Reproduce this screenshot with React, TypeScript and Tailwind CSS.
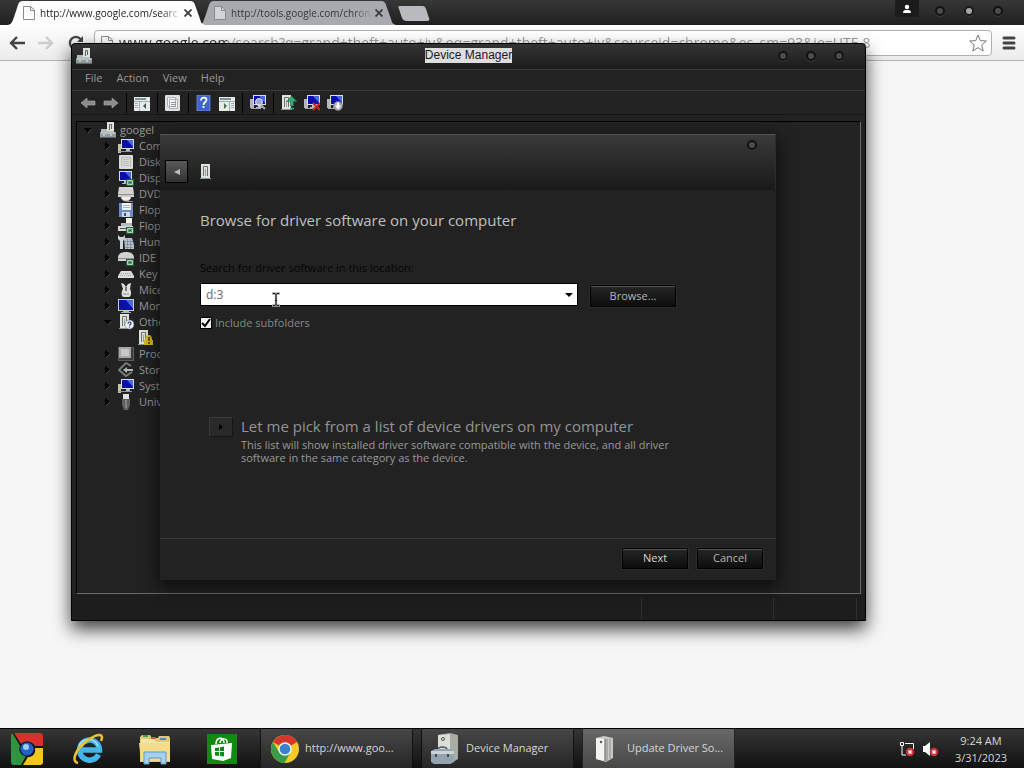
import { useState } from "react"
import type { ReactNode } from "react"

interface TreeItem {
  label: string
  icon: ReactNode
  open?: boolean
  child?: ReactNode
}

function Glyph({ children }: { children: ReactNode }) {
  return (
    <svg viewBox="0 0 16 16" className="size-4 shrink-0" aria-hidden="true">
      {children}
    </svg>
  )
}

/* shared parts of the small device drawings */
function Screen({ x = 0, y = 0 }: { x?: number; y?: number }) {
  return (
    <g transform={`translate(${x} ${y})`}>
      <rect x="0" y="0" width="13" height="10" fill="#d6dde4" />
      <rect x="1" y="1" width="11" height="8" fill="#0a0fa8" />
      <path d="M6 1h6v7z" fill="#4a68e0" />
      <path d="M5 10h4v2h2v1H3v-1h2z" fill="#b4bcc2" />
    </g>
  )
}

function Tower({ x = 0, y = 0 }: { x?: number; y?: number }) {
  return (
    <g transform={`translate(${x} ${y})`}>
      <rect x="0" y="0" width="9" height="14" fill="#dfe3dd" />
      <path d="M2.500 12V2.500h4V12" fill="none" stroke="#6c726c" />
      <rect x="4" y="5" width="1" height="7" fill="#9aa09a" />
      <rect x="-1" y="14" width="11" height="1" fill="#8f968f" />
    </g>
  )
}

function CardBadge() {
  return (
    <g>
      <rect x="8" y="9" width="8" height="7" fill="#25613c" />
      <path d="M9.500 10.500h5v4h-5z" fill="#5d9c72" stroke="#a8d6b4" />
      <path d="M11 12.500h2" stroke="#25613c" />
    </g>
  )
}

const ComputerGlyph = (
  <Glyph>
    <rect x="0" y="6" width="3" height="9" fill="#c3c6ad" />
    <Screen x={3} y={1} />
    <rect x="1" y="13" width="13" height="1" fill="#8e979e" />
  </Glyph>
)

const MachineGlyph = (
  <Glyph>
    <path d="M7 0h7v9H7z" fill="#dde2dd" />
    <path d="M9.500 8V2.500h2V7" fill="none" stroke="#5e6660" />
    <path d="M1 7h6v2h7v2H1z" fill="#b4bcbc" />
    <rect x="0" y="10" width="16" height="5" fill="#8f9a9c" />
    <path d="M1 11h14M3 13h2m5 0h2" stroke="#e3e9e9" />
    <path d="M0 15.500h16" stroke="#5c6668" />
  </Glyph>
)

// labels are shortened to the strip left of the dialog
const tree: TreeItem[] = [
  { label: "Com", icon: ComputerGlyph },
  {
    label: "Disk",
    icon: (
      <Glyph>
        <rect x="1" y="1" width="14" height="14" rx="1" fill="#d9dbd6" />
        <path d="M3.500 3.500h9v8h-9zM5 5.500h6m-6 2h6m-6 2h6" fill="none" stroke="#b9bcb7" />
      </Glyph>
    ),
  },
  {
    label: "Disp",
    icon: (
      <Glyph>
        <Screen x={1} y={1} />
        <CardBadge />
      </Glyph>
    ),
  },
  {
    label: "DVD",
    icon: (
      <Glyph>
        <path d="M1 1h14l1 7v3H0V8z" fill="#d4d5d2" />
        <path d="M0 8.500h16" stroke="#8f918d" />
        <path d="M3 10h10c0 3-2 5-5 5s-5-2-5-5z" fill="#eceeec" stroke="#b5b8b4" />
        <path d="M9 15.500h6" stroke="#d2763a" />
      </Glyph>
    ),
  },
  {
    label: "Flop",
    icon: (
      <Glyph>
        <path d="M1 1h14v14H1z" fill="#6d8cc6" />
        <path d="M4 1h9v7H4z" fill="#eef2f6" />
        <path d="M5 3.500h7m-7 2h7" stroke="#a9b4c4" />
        <path d="M4 10h8v5H4z" fill="#d4dbe2" />
        <path d="M6 11h2v3H6z" fill="#3a5480" />
      </Glyph>
    ),
  },
  {
    label: "Flop",
    icon: (
      <Glyph>
        <path d="M8 0h6v5H8z" fill="#f1f3f3" />
        <path d="M3 5h11v3H3z" fill="#b4babb" />
        <path d="M0 8h15v5H0z" fill="#d5dadb" />
        <path d="M2 10.500h6" stroke="#4d5556" />
        <CardBadge />
      </Glyph>
    ),
  },
  {
    label: "Hum",
    icon: (
      <Glyph>
        <path d="M0 1v4l2 2v8h3V7l2-2V1L5 3H2z" fill="#ccd3da" />
        <path d="M6 4h8l2 7v4H7z" fill="#b9c3cd" />
        <path d="M7 7.500h8m-8 3h8m-8 3h8M9.500 5v10m3-10v10" stroke="#7b8896" strokeWidth=".8" />
      </Glyph>
    ),
  },
  {
    label: "IDE",
    icon: (
      <Glyph>
        <path d="M0 7c1-4 4-5 8-5s7 1 8 5v4H0z" fill="#cfd3d0" />
        <path d="M0 8.500h16" stroke="#878d89" />
        <CardBadge />
      </Glyph>
    ),
  },
  {
    label: "Key",
    icon: (
      <Glyph>
        <path d="M3 5h10l3 5v2H0v-2z" fill="#dcdcda" />
        <path d="M3 7.500h10M2 9.500h12" stroke="#a2a2a0" strokeDasharray="1 1" />
      </Glyph>
    ),
  },
  {
    label: "Mice",
    icon: (
      <Glyph>
        <path d="M3 1l3 1 2 3 2-3 3-1-1 6c2 3 1 8-1 8H6c-3 0-3-5-1-8z" fill="#dededa" />
        <path d="M8 5v4" stroke="#555" strokeWidth="1.500" />
        <path d="M5 12h6" stroke="#94948f" />
      </Glyph>
    ),
  },
  {
    label: "Mon",
    icon: (
      <Glyph>
        <rect x="0" y="1" width="16" height="12" fill="#c5ccd2" />
        <rect x="1" y="2" width="14" height="10" fill="#0a10ac" />
        <path d="M8 2h7v9z" fill="#4c6ae2" />
        <path d="M5 13h6v1h2v1H3v-1h2z" fill="#abb4ba" />
      </Glyph>
    ),
  },
  {
    label: "Othe",
    open: true,
    icon: (
      <Glyph>
        <Tower x={2} />
        <circle cx="11.500" cy="10.500" r="4.500" fill="#eef0f8" stroke="#717996" strokeWidth=".6" />
        <path d="M10 9.500c0-2 3-2 3 0 0 1-1.500 1-1.500 2m0 1v1" fill="none" stroke="#27327c" strokeWidth="1.200" />
      </Glyph>
    ),
    child: (
      <Glyph>
        <Tower x={1} />
        <path d="M11 5c2 0 3 2 3 5h1v5H6v-5h1c0-3 2-5 4-5z" fill="#d6b62a" />
        <path d="M11 7v4m0 1v2" stroke="#4a3a04" strokeWidth="1.500" />
      </Glyph>
    ),
  },
  {
    label: "Proc",
    icon: (
      <Glyph>
        <rect x=".5" y="1.500" width="15" height="13" fill="#3a3c3b" stroke="#8a8d8b" strokeDasharray="1 1" />
        <rect x="1" y="1" width="12" height="11" fill="#a4a7a5" />
        <rect x="3" y="3" width="8" height="7" fill="#c6c8c6" />
      </Glyph>
    ),
  },
  {
    label: "Stor",
    icon: (
      <Glyph>
        <path d="M13 4L8 1 1 8l7 6 6-4" fill="none" stroke="#767a78" strokeWidth="2" />
        <path d="M5 8l4-3v2h6v2H9v2z" fill="#b3b6b4" />
      </Glyph>
    ),
  },
  { label: "Syst", icon: ComputerGlyph },
  {
    label: "Univ",
    icon: (
      <Glyph>
        <rect x="5" y="0" width="6" height="5" fill="#dfe0df" />
        <path d="M4 5h8v6l-2 5H6l-2-5z" fill="#5f6160" />
        <path d="M8 6v8" stroke="#8d8f8e" strokeWidth="1.500" />
      </Glyph>
    ),
  },
]

interface Tool {
  name: string
  icon?: ReactNode
}

const ArrowShape = (
  <path d="M1 8l6-5v3h8v4H7v3z" fill="#8b8b8b" stroke="#b0b0b0" strokeWidth=".6" />
)

const PaneGlyph = ({ side }: { side: "left" | "right" }) => (
  <Glyph>
    <rect x="0" y="2" width="16" height="14" fill="#e6eaea" />
    <rect x="1" y="3" width="11" height="2" fill="#7f9096" />
    <path d="M0 6.500h16" stroke="#9fabae" />
    {side === "left" ? (
      <>
        <path d="M5.500 7v9M1 8.500h3m-3 2h3m-3 2h3" stroke="#a0acaf" />
        <path d="M12 8v6l-3-3z" fill="#3e5a50" />
      </>
    ) : (
      <>
        <path d="M10.500 7v9m1.500-7.500h3m-3 2h3m-3 2h3" stroke="#a0acaf" />
        <path d="M5 8v6l3-3z" fill="#3c7a48" />
      </>
    )}
  </Glyph>
)

const tools: Tool[] = [
  { name: "Back", icon: <Glyph>{ArrowShape}</Glyph> },
  { name: "Forward", icon: <Glyph><g transform="translate(16 0) scale(-1 1)">{ArrowShape}</g></Glyph> },
  { name: "" },
  { name: "Show console tree", icon: <PaneGlyph side="left" /> },
  { name: "" },
  {
    name: "Properties",
    icon: (
      <Glyph>
        <rect x="0" y="0" width="15" height="16" rx="1" fill="#dfe1e1" />
        <path d="M2.500 2.500h8v9h-8zM4.500 4.500h8v9h-8z" fill="#f5f6f6" stroke="#a9afb1" />
        <path d="M6 7.500h5m-5 2h5m-5 2h5" stroke="#8f979a" />
      </Glyph>
    ),
  },
  { name: "" },
  {
    name: "Help",
    icon: (
      <Glyph>
        <rect x="1" y="0" width="13" height="16" fill="#3f63c8" stroke="#7d9ae0" strokeWidth=".7" />
        <path d="M5 5.500C5 1.500 10.500 2 10.500 5c0 2-3 2-3 5m0 1v2" fill="none" stroke="#fff" strokeWidth="1.800" />
      </Glyph>
    ),
  },
  { name: "Show action pane", icon: <PaneGlyph side="right" /> },
  { name: "" },
  {
    name: "Scan for hardware changes",
    icon: (
      <Glyph>
        <rect x="0" y="4" width="4" height="9" fill="#b3b7bb" />
        <Screen x={3} y={0} />
        <circle cx="9" cy="7" r="3.500" fill="#c2cbe8" fillOpacity=".8" stroke="#e0e4ea" />
        <path d="M11 10l4 4" stroke="#a0a5aa" strokeWidth="2" />
        <path d="M1 13.500h10" stroke="#a5abb0" />
      </Glyph>
    ),
  },
  { name: "" },
  {
    name: "Update driver software",
    icon: (
      <Glyph>
        <Tower x={1} />
        <path d="M10.500 1L16 6.500h-3.500V11h-3V6.500H6z" fill="#3aa873" stroke="#1d6a45" strokeWidth=".6" />
        <path d="M9 13.500h4" stroke="#3aa873" strokeWidth="1.500" />
      </Glyph>
    ),
  },
  {
    name: "Uninstall",
    icon: (
      <Glyph>
        <rect x="0" y="4" width="4" height="9" fill="#b3b7bb" />
        <Screen x={3} y={0} />
        <path d="M1 13.500h8" stroke="#a5abb0" />
        <path d="M9 8l7 7m0-7l-7 7" stroke="#e01e1e" strokeWidth="2" />
      </Glyph>
    ),
  },
  {
    name: "Disable",
    icon: (
      <Glyph>
        <rect x="0" y="4" width="4" height="9" fill="#b3b7bb" />
        <Screen x={3} y={0} />
        <path d="M1 13.500h8" stroke="#a5abb0" />
        <circle cx="11" cy="11" r="4.500" fill="#a9acaf" stroke="#7e8286" strokeWidth=".6" />
        <path d="M10 7.500h2v3h2l-3 4-3-4h2z" fill="#fff" />
      </Glyph>
    ),
  },
]

function PageIcon() {
  return (
    <svg viewBox="0 0 12 14" className="h-3.5 w-3 shrink-0" fill="none" stroke="#8a8a8a" aria-hidden="true">
      <path d="M.5.5h7L11.500 4v9.500h-11z" fill="#fbfbfb" fillOpacity=".5" />
      <path d="M7.500.5V4.500h4" />
    </svg>
  )
}

function Tab({ title, active }: { title: string; active?: boolean }) {
  return (
    <div className={active ? "relative z-10 h-6 w-[197px]" : "relative -ml-1.5 h-6 w-[197px]"}>
      <svg viewBox="0 0 197 24" preserveAspectRatio="none" className="absolute inset-0 size-full" aria-hidden="true">
        <path
          d="M0 24c4-1 4-3 6-8l4-12c1-3 2-4 5-4h167c3 0 4 1 5 4l5 14c1 4 2 5 5 6z"
          fill={active ? "#fdfdfd" : "#a9aab0"}
        />
      </svg>
      <div className="relative flex h-full items-center pl-[15px] text-[10px]">
        <PageIcon />
        <span
          className={
            active
              ? "ml-[5px] w-36 whitespace-nowrap text-[#222] [mask-image:linear-gradient(to_right,#000_85%,transparent_98%)]"
              : "ml-[5px] w-36 whitespace-nowrap text-[#35373c] [mask-image:linear-gradient(to_right,#000_85%,transparent_98%)]"
          }
        >
          {title}
        </span>
        <button type="button" aria-label="Close tab" className="flex size-2 items-center justify-center">
          <svg viewBox="0 0 8 8" className="size-2" stroke="#3c3c3c" strokeWidth="1.800" aria-hidden="true">
            <path d="M.5.5l7 7m0-7l-7 7" />
          </svg>
        </button>
      </div>
    </div>
  )
}

function Dot({ label, lit }: { label: string; lit?: boolean }) {
  return (
    <button
      type="button"
      aria-label={label}
      className={
        lit
          ? "size-2.5 rounded-full border-2 border-[#1a1a1a] bg-[#a5a5a5] shadow-[0_1px_1px_#3c3c3c]"
          : "size-2.5 rounded-full border-2 border-[#111] bg-[#4c4c4c] shadow-[0_1px_1px_#3c3c3c]"
      }
    />
  )
}

function Browser() {
  return (
    <div className="flex min-h-0 flex-1 flex-col bg-[#f6f6f6]">
      <div className="flex h-[25px] shrink-0 items-end bg-linear-to-b from-[#363836] to-[#1f1f1f] pl-2">
        <Tab title="http://www.google.com/searc" active />
        <Tab title="http://tools.google.com/chron" />
        <button type="button" aria-label="New tab" className="mb-1 ml-0.5">
          <svg viewBox="0 0 32 15" className="h-[15px] w-8" aria-hidden="true">
            <path d="M2 0h22c3 0 3 1 4 3l3 9c1 2 0 3-2 3H9c-3 0-4-1-5-3L1 3c-1-2-1-3 1-3z" fill="#b9babd" />
          </svg>
        </button>
        <div className="ml-auto flex h-full items-start gap-5 pr-[21px]">
          <button type="button" aria-label="User" className="flex h-[17px] w-6 items-center justify-center bg-[#1b1c1b]">
            <svg viewBox="0 0 10 10" className="size-2.5" fill="#fff" aria-hidden="true">
              <circle cx="5" cy="3" r="2.200" />
              <path d="M1 9c0-2 1-3 2.500-3h3C8 6 9 7 9 9z" />
            </svg>
          </button>
          <div className="-ml-1 flex gap-[19px] pt-1.5">
            <Dot label="Minimize browser" />
            <Dot label="Maximize browser" lit />
            <Dot label="Close browser" />
          </div>
        </div>
      </div>
      <div className="flex h-9 shrink-0 items-center border-b border-[#b4b4b4] bg-linear-to-b from-[#fdfdfd] to-[#ececec] pr-2 pl-[9px]">
        <button type="button" aria-label="Go back">
          <svg viewBox="0 0 16 14" className="h-3.5 w-4" fill="none" stroke="#444" strokeWidth="2.400" aria-hidden="true">
            <path d="M8 1L2 7l6 6M2 7h14" />
          </svg>
        </button>
        <button type="button" aria-label="Go forward" className="ml-[13px]">
          <svg viewBox="0 0 16 14" className="h-3.5 w-4" fill="none" stroke="#ccc" strokeWidth="2.400" aria-hidden="true">
            <path d="M8 1l6 6-6 6M14 7H0" />
          </svg>
        </button>
        <button type="button" aria-label="Reload" className="ml-3.5">
          <svg viewBox="0 0 16 16" className="size-4" fill="none" stroke="#444" strokeWidth="2.400" aria-hidden="true">
            <path d="M13.500 10A6 6 0 1 1 12.500 4" />
            <path d="M15 1v6H9z" fill="#444" stroke="none" />
          </svg>
        </button>
        <div className="ml-2.5 flex h-[26px] flex-1 items-center rounded-sm border border-[#b0b0b0] bg-white pr-1 pl-1.5">
          <PageIcon />
          <input
            aria-label="Address"
            defaultValue="www.google.com/search?q=grand+theft+auto+iv&oq=grand+theft+auto+iv&sourceid=chrome&es_sm=93&ie=UTF-8"
            className="ml-1.5 min-w-0 flex-1 bg-linear-to-r from-[#333] from-[108px] to-[#9a9a9a] to-[108px] bg-clip-text text-[14px] text-transparent outline-none"
          />
          <button type="button" aria-label="Bookmark this page">
            <svg viewBox="0 0 18 18" className="size-[18px]" fill="#fff" stroke="#777" aria-hidden="true">
              <path d="M9 1l2.300 5.600 6 .4-4.600 3.900L14.200 17 9 13.600 3.800 17l1.500-6.100L.7 7l6-.4z" />
            </svg>
          </button>
        </div>
        <button type="button" aria-label="Menu" className="ml-2.5">
          <svg viewBox="0 0 14 14" className="size-3.5" stroke="#444" strokeWidth="3" strokeLinecap="round" aria-hidden="true">
            <path d="M2 2h10M2 7h10M2 12h10" />
          </svg>
        </button>
      </div>
    </div>
  )
}

function Chevron({ open }: { open?: boolean }) {
  return (
    <svg viewBox="0 0 8 8" className="size-2 shrink-0" aria-hidden="true">
      {open ? (
        <>
          <path d="M0 2h8L4 7z" fill="#000" />
          <path d="M7.500 3L4 7" stroke="#555" />
        </>
      ) : (
        <>
          <path d="M1 0v8l5-4z" fill="#000" />
          <path d="M2 8l4-4" stroke="#555" />
        </>
      )}
    </svg>
  )
}

function DeviceTree() {
  return (
    <ul className="mx-1 flex-1 overflow-hidden border border-t-black border-r-[#6a6a6a] border-b-[#6a6a6a] border-l-black bg-[#222] text-[11px] leading-4 text-[#999]">
      <li className="flex h-4 items-center pl-[7px]">
        <Chevron open />
        <span className="ml-2 flex items-center gap-1">
          {MachineGlyph}
          googel
        </span>
      </li>
      {tree.map((item, i) => (
        <li key={i} className="pl-[27px]">
          <div className="flex h-4 items-center whitespace-nowrap">
            <Chevron open={item.open} />
            <span className="ml-1.5 flex items-center gap-[5px]">
              {item.icon}
              {item.label}
            </span>
          </div>
          {item.child && <div className="h-4 pl-[34px]">{item.child}</div>}
        </li>
      ))}
    </ul>
  )
}

function DeviceManager() {
  return (
    <section
      aria-label="Device Manager"
      className="absolute top-[43px] right-[158px] bottom-[147px] left-[71px] flex flex-col rounded-t border border-black bg-[#222] shadow-[0_8px_18px_rgba(0,0,0,0.75)]"
    >
      <header className="grid h-[26px] shrink-0 grid-cols-[1fr_auto_1fr] items-center rounded-t border-b border-[#3a3a3a] bg-linear-to-b from-[#343434] to-[#1b1b1b] px-1 pb-0.5">
        <div>{MachineGlyph}</div>
        <h1 className="bg-[#dedede] font-['Liberation_Sans',sans-serif] text-[12px] leading-[15px] text-[#1a1a1a]">
          Device Manager
        </h1>
        <div className="flex justify-end gap-[18px] pr-[17px]">
          <Dot label="Minimize" />
          <Dot label="Maximize" />
          <Dot label="Close" />
        </div>
      </header>
      <nav className="flex h-[21px] shrink-0 items-center gap-3.5 border-b border-[#3a3a3a] pb-[3px] pl-[13px] text-[11px] text-[#999]">
        <button type="button">File</button>
        <button type="button">Action</button>
        <button type="button">View</button>
        <button type="button">Help</button>
      </nav>
      <div className="mb-1.5 flex h-6 shrink-0 items-center gap-[7px] border-b border-[#151515] pl-2">
        {tools.map((tool, i) =>
          tool.icon ? (
            <button key={i} type="button" aria-label={tool.name}>
              {tool.icon}
            </button>
          ) : (
            <span key={i} className="h-5 w-px bg-black" />
          ),
        )}
      </div>
      <DeviceTree />
      <footer className="flex h-[26px] shrink-0 items-end justify-end bg-[#1d1d1d] pr-2">
        <span className="h-[22px] w-[132px] border-l border-[#303030]" />
        <span className="h-[22px] w-[84px] border-x border-[#303030]" />
      </footer>
      <UpdateDriver />
    </section>
  )
}

const buttonLook =
  "border border-black bg-linear-to-b from-[#262626] to-[#0d0d0d] text-[11px] shadow-[0_0_0_1px_#2c2c2c,inset_0_1px_0_#555]"

function UpdateDriver() {
  const [location, setLocation] = useState("d:3")
  const [subfolders, setSubfolders] = useState(true)

  return (
    <div
      role="dialog"
      aria-label="Update Driver Software"
      className="absolute top-[90px] right-[89px] bottom-10 left-[88px] flex flex-col bg-[#222] shadow-[0_6px_16px_2px_rgba(0,0,0,0.6)]"
    >
      <header className="flex h-14 shrink-0 flex-col border-t border-r border-t-[#555] border-r-[#2c2c2c] bg-linear-to-b from-[#3a3a3a] to-[#1a1a1a] pl-[5px]">
        <div className="flex h-[25px] items-start justify-end pt-[5px] pr-[18px]">
          <Dot label="Close dialog" />
        </div>
        <div className="flex items-center gap-3">
          <button
            type="button"
            aria-label="Previous step"
            className="flex size-[23px] items-center justify-center border border-black bg-linear-to-b from-[#5a5a5a] to-[#333]"
          >
            <svg viewBox="0 0 8 8" className="size-2" fill="#bbb" aria-hidden="true">
              <path d="M7 1v6L1 4z" />
            </svg>
          </button>
          <Glyph>
            <Tower x={1} />
          </Glyph>
        </div>
      </header>

      <div className="flex flex-1 flex-col pl-10">
        <h2 className="mt-[18px] text-[15px] leading-6 text-[#c0c0c0]">
          Browse for driver software on your computer
        </h2>
        <label htmlFor="location" className="mt-7 text-[11px] leading-4 text-[#050505]">
          Search for driver software in this location:
        </label>
        <div className="mt-[7px] flex items-start gap-3">
          <div className="relative flex h-[23px] w-[378px] items-center border border-black bg-white">
            <input
              id="location"
              value={location}
              onChange={(e) => setLocation(e.target.value)}
              className="h-full min-w-0 flex-1 pl-[5px] text-[12px] text-[#666] outline-none"
            />
            <button type="button" aria-label="Show recent locations" className="flex h-full w-4 items-center justify-center">
              <svg viewBox="0 0 8 4" className="h-1 w-2" aria-hidden="true">
                <path d="M0 0h8L4 4z" />
              </svg>
            </button>
            {/* text cursor over the field */}
            <svg viewBox="0 0 8 15" className="pointer-events-none absolute top-2 left-[71px] h-[15px] w-2" fill="none" aria-hidden="true">
              <path d="M0 1.500h3l1 1 1-1h3M4 2v11M0 13.500h3l1-1 1 1h3" stroke="#aaa" strokeWidth="2.500" />
              <path d="M1 1.500h2l1 1 1-1h2M4 2v11M1 13.500h2l1-1 1 1h2M3 8.500h2" stroke="#111" />
            </svg>
          </div>
          <button type="button" className={`${buttonLook} mt-0.5 h-[22px] w-[86px] text-[#b5b5b5]`}>
            Browse...
          </button>
        </div>
        <label className="mt-2 flex items-center gap-[3px] text-[11px] leading-4 text-[#888]">
          <input
            type="checkbox"
            checked={subfolders}
            onChange={(e) => setSubfolders(e.target.checked)}
            className="peer sr-only"
          />
          <span className="flex size-3 items-center justify-center border border-black bg-[#f2f2f2] peer-[:not(:checked)]:*:hidden">
            <svg viewBox="0 0 10 10" className="size-2.5" fill="none" stroke="#000" strokeWidth="2" aria-hidden="true">
              <path d="M1 5l3 3 5-7" />
            </svg>
          </span>
          Include subfolders
        </label>

        <button type="button" className="mt-[83px] ml-[9px] flex items-start gap-2 text-left">
          <span className="mt-[3px] flex h-5 w-6 items-center justify-center border border-[#3a3a3a] border-r-[#151515] border-b-[#151515] bg-[#292929]">
            <svg viewBox="0 0 6 8" className="h-2 w-1.5" aria-hidden="true">
              <path d="M1 1v6l4-3z" />
            </svg>
          </span>
          <span className="flex flex-col text-[#999]">
            <span className="text-[15px] leading-6 text-[#949494]">Let me pick from a list of device drivers on my computer</span>
            <span className="w-[440px] text-[11px] leading-[13px]">
              This list will show installed driver software compatible with the device, and all driver software in the same
              category as the device.
            </span>
          </span>
        </button>
      </div>

      <footer className="flex h-[42px] shrink-0 items-start justify-end gap-[9px] border-t border-[#383838] pt-[9px] pr-[13px]">
        <button type="button" className={`${buttonLook} h-[21px] w-[66px] text-[#d4d4d4]`}>
          Next
        </button>
        <button type="button" className={`${buttonLook} h-[21px] w-[66px] text-[#b5b5b5]`}>
          Cancel
        </button>
      </footer>
    </div>
  )
}

function ChromeLogo({ className }: { className: string }) {
  return (
    <svg viewBox="0 0 28 28" className={className} aria-hidden="true">
      <circle cx="14" cy="14" r="14" fill="#f7ca27" />
      <path d="M14 14L1.900 7A14 14 0 0 1 26.100 7z" fill="#d9362b" />
      <path d="M14 0a14 14 0 0 1 12.100 7H14z" fill="#d9362b" />
      <path d="M1.900 7A14 14 0 0 0 13.500 28l6-10.500L14 20l-6-3z" fill="#3a9c46" />
      <circle cx="14" cy="14" r="6.800" fill="#f2f4f6" />
      <circle cx="14" cy="14" r="5.300" fill="#3f80cc" />
    </svg>
  )
}

function StartLogo() {
  return (
    <svg viewBox="0 0 32 32" className="size-8" aria-hidden="true">
      <rect width="32" height="32" rx="3" fill="#151515" />
      <path d="M3 0h26c2 0 3 1 3 3v10h-8C21 8 14 7 10 11z" fill="#d8302c" />
      <path d="M0 3c0-2 1-3 2-2l7 12c-2 5 1 9 6 10l-5 9H3c-2 0-3-1-3-3z" fill="#2f9440" />
      <path d="M12 32l5-8c5 0 8-4 7-9h8v14c0 2-1 3-3 3z" fill="#f2c71e" />
      <circle cx="16" cy="16" r="7.500" fill="#0d1c3c" />
      <circle cx="16" cy="16" r="6.500" fill="#1f62c4" />
      <circle cx="15" cy="14" r="3" fill="#9ccbf4" />
    </svg>
  )
}

function ExplorerELogo() {
  return (
    <svg viewBox="0 0 32 32" className="size-8" fill="none" aria-hidden="true">
      <path d="M26.500 21.500a10 10 0 1 1 1-4.500H9" stroke="#45b4e8" strokeWidth="5.500" />
      <path d="M26 13.500a10 10 0 0 0-19 0" stroke="#a5e0f8" strokeWidth="1.500" />
      <path d="M6 30c-6-1-4-10 4-18S29-1 30 4c0 2-1 4-1 4" stroke="#f0c02c" strokeWidth="2.500" />
    </svg>
  )
}

function FolderLogo() {
  return (
    <svg viewBox="0 0 34 32" className="h-8 w-[34px]" aria-hidden="true">
      <path d="M2 4l2-2h8l2 3h6l1-2h10l1 2v24H2z" fill="#e3c873" />
      <path d="M3 6h13l2 3h14v19H3z" fill="#f6e6a4" />
      <path d="M5 2h5v2H5z" fill="#3f9a52" />
      <path d="M13 4h5v2h-5z" fill="#cf5744" />
      <path d="M22 5h6v2h-6z" fill="#4a86cc" />
      <path d="M1 10h31l-1 18H3z" fill="#f3dd8c" />
      <path d="M6 31V19h22v12h-5v-6H11v6z" fill="#a5d0ee" stroke="#5e9bcc" />
    </svg>
  )
}

function StoreLogo() {
  return (
    <svg viewBox="0 0 30 30" className="size-[30px]" aria-hidden="true">
      <rect width="30" height="30" fill="#118a12" />
      <path d="M9 10c0-7 8-8 8-1M13 9c1-6 8-5 7 0" fill="none" stroke="#fff" strokeWidth="1.500" />
      <path d="M4 11l21-2-1 15-8 3-11-2z" fill="#fff" />
      <path d="M8 14l4-.6V17H8zm5-.8l4-.6V17h-4zM8 18h4v4l-4-.6zm5 0h4v4.600l-4-.6z" fill="#118a12" />
    </svg>
  )
}

function DeviceLogo() {
  return (
    <svg viewBox="0 0 30 32" className="h-8 w-[30px]" aria-hidden="true">
      <path d="M8 2l12-2 8 2v24l-8 5H8z" fill="#a9aba5" />
      <path d="M8 2l12-1v29H8z" fill="#dcddd7" />
      <circle cx="13" cy="6" r="1.500" fill="none" stroke="#555" />
      <path d="M8 17c0-4 9-4 9 0" fill="none" stroke="#4c5860" strokeWidth="1.500" />
      <path d="M1 18l4-2h16l3 2v11l-4 2H4l-3-2z" fill="#93a4b0" />
      <path d="M1 18h23v3H1z" fill="#c8d3da" />
      <path d="M6 21v3m12-3v3" stroke="#3f4c55" strokeWidth="2" />
    </svg>
  )
}

function CaseLogo() {
  return (
    <svg viewBox="0 0 20 26" className="h-[26px] w-5" aria-hidden="true">
      <path d="M1 2l8-2 9 2v20l-7 4-10-3z" fill="#c9cac6" />
      <path d="M1 2l9 1v22l-9-2z" fill="#f3f3f0" />
      <path d="M12 3v22M15 3v20" stroke="#8b8c88" />
      <path d="M10 3v22" stroke="#555" />
      <circle cx="6" cy="6" r="1.200" fill="#555" />
    </svg>
  )
}

function Taskbar() {
  return (
    <footer className="flex h-10 shrink-0 items-stretch border-t border-black bg-linear-to-b from-[#363636] to-[#111] text-[11px] text-[#d6d6d6]">
      <button type="button" aria-label="Start" className="flex w-[54px] items-center justify-center">
        <StartLogo />
      </button>
      <button type="button" aria-label="Internet Explorer" className="flex w-[68px] items-center justify-center">
        <ExplorerELogo />
      </button>
      <button type="button" aria-label="File Explorer" className="flex w-[66px] items-center justify-center">
        <FolderLogo />
      </button>
      <button type="button" aria-label="Store" className="flex w-[68px] items-center justify-center">
        <StoreLogo />
      </button>
      <div className="ml-1 flex gap-2">
        <button type="button" className="flex w-[153px] items-center border-x border-[#111] bg-linear-to-b from-[#474747] to-[#262626] pl-2.5">
          <span className="flex w-[34px]">
            <ChromeLogo className="size-7" />
          </span>
          http://www.goo...
        </button>
        <button type="button" className="flex w-[153px] items-center border-x border-[#111] bg-linear-to-b from-[#474747] to-[#262626] pl-2">
          <span className="flex w-9">
            <DeviceLogo />
          </span>
          Device Manager
        </button>
        <button type="button" className="flex w-[153px] items-center border-x border-[#222] bg-linear-to-b from-[#686868] to-[#484848] pl-3">
          <span className="flex w-8">
            <CaseLogo />
          </span>
          Update Driver So...
        </button>
      </div>
      <div className="ml-auto flex items-center pr-[17px]">
        <svg viewBox="0 0 16 16" className="size-4" fill="none" stroke="#fff" role="img" aria-label="Network disconnected">
          <path d="M1.500 1.500h3v3h-3zM3 5v9h4M6 2.500h8.500V8" />
          <circle cx="11" cy="11" r="4.200" fill="#d0303a" stroke="none" />
          <path d="M9.500 9.500l3 3m0-3l-3 3" strokeWidth="1.500" />
        </svg>
        <svg viewBox="0 0 16 16" className="ml-2 size-4" fill="#fff" role="img" aria-label="Sound muted">
          <path d="M0 5h2l5-4v14l-5-4H0z" />
          <circle cx="11" cy="11" r="4.200" fill="#d0303a" />
          <path d="M9.500 9.500l3 3m0-3l-3 3" stroke="#fff" strokeWidth="1.500" />
        </svg>
        <time dateTime="2023-03-31T09:24" className="ml-4 flex flex-col text-center leading-[17px]">
          <span>9:24 AM</span>
          <span>3/31/2023</span>
        </time>
      </div>
    </footer>
  )
}

export default function App() {
  return (
    <main className="relative flex h-screen flex-col overflow-hidden font-['Open_Sans','Noto_Sans',sans-serif]">
      <Browser />
      <DeviceManager />
      <Taskbar />
    </main>
  )
}
